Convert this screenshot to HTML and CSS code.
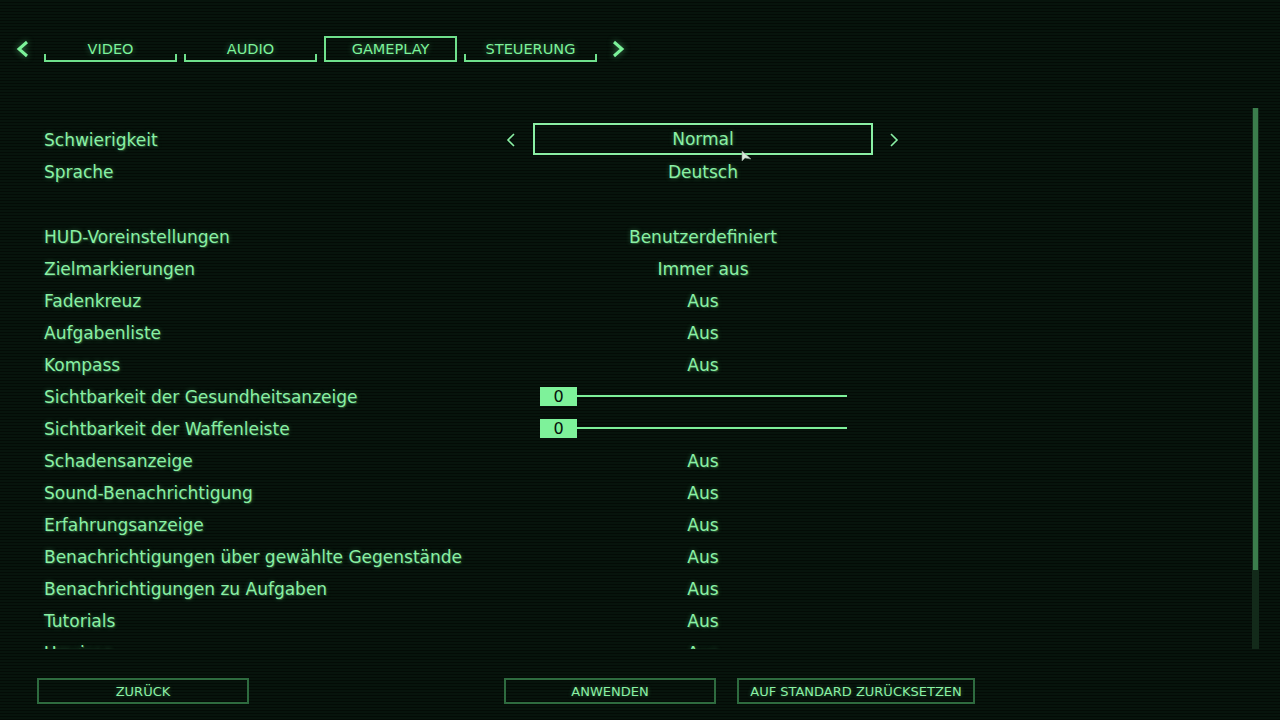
FILE: index.html
```html
<!DOCTYPE html>
<html lang="de">
<head>
  <meta charset="UTF-8" />
  <meta name="viewport" content="width=device-width, initial-scale=1.0" />
  <title>Einstellungen - Gameplay</title>
  <link rel="stylesheet" href="styles.css">
</head>
<body>
  <div class="screen">
    <nav class="tabs">
      <span class="chev">
        <svg width="14" height="18" viewBox="0 0 14 18"><path d="M11 2 L3 9 L11 16" fill="none" stroke="#7cf29a" stroke-width="3"/></svg>
      </span>
      <div class="tab">VIDEO</div>
      <div class="tab">AUDIO</div>
      <div class="tab active">GAMEPLAY</div>
      <div class="tab">STEUERUNG</div>
      <span class="chev">
        <svg width="14" height="18" viewBox="0 0 14 18"><path d="M3 2 L11 9 L3 16" fill="none" stroke="#7cf29a" stroke-width="3"/></svg>
      </span>
    </nav>

    <main class="panel">
      <div class="list">
        <div class="row">
          <span class="label">Schwierigkeit</span>
          <span class="arrow">
            <svg width="10" height="16" viewBox="0 0 10 16"><path d="M8 2 L2 8 L8 14" fill="none" stroke="#8af0a4" stroke-width="1.6"/></svg>
          </span>
          <span class="value boxed">Normal</span>
          <span class="arrow">
            <svg width="10" height="16" viewBox="0 0 10 16"><path d="M2 2 L8 8 L2 14" fill="none" stroke="#8af0a4" stroke-width="1.6"/></svg>
          </span>
          <svg class="cursor" width="12" height="14" viewBox="0 0 12 14"><path d="M1 1 L1 11 L4 8 L10 9 Z" fill="#d8e8dc" stroke="#8a9a90" stroke-width="0.6"/></svg>
        </div>
        <div class="row">
          <span class="label">Sprache</span>
          <span class="arrow"></span>
          <span class="value">Deutsch</span>
        </div>

        <div class="spacer"></div>

        <div class="row"><span class="label">HUD-Voreinstellungen</span><span class="arrow"></span><span class="value">Benutzerdefiniert</span></div>
        <div class="row"><span class="label">Zielmarkierungen</span><span class="arrow"></span><span class="value">Immer aus</span></div>
        <div class="row"><span class="label">Fadenkreuz</span><span class="arrow"></span><span class="value">Aus</span></div>
        <div class="row"><span class="label">Aufgabenliste</span><span class="arrow"></span><span class="value">Aus</span></div>
        <div class="row"><span class="label">Kompass</span><span class="arrow"></span><span class="value">Aus</span></div>
        <div class="row">
          <span class="label">Sichtbarkeit der Gesundheitsanzeige</span>
          <span class="arrow"></span>
          <span class="slider"><span class="knob">0</span><span class="track"></span></span>
        </div>
        <div class="row">
          <span class="label">Sichtbarkeit der Waffenleiste</span>
          <span class="arrow"></span>
          <span class="slider"><span class="knob">0</span><span class="track"></span></span>
        </div>
        <div class="row"><span class="label">Schadensanzeige</span><span class="arrow"></span><span class="value">Aus</span></div>
        <div class="row"><span class="label">Sound-Benachrichtigung</span><span class="arrow"></span><span class="value">Aus</span></div>
        <div class="row"><span class="label">Erfahrungsanzeige</span><span class="arrow"></span><span class="value">Aus</span></div>
        <div class="row"><span class="label">Benachrichtigungen über gewählte Gegenstände</span><span class="arrow"></span><span class="value">Aus</span></div>
        <div class="row"><span class="label">Benachrichtigungen zu Aufgaben</span><span class="arrow"></span><span class="value">Aus</span></div>
        <div class="row"><span class="label">Tutorials</span><span class="arrow"></span><span class="value">Aus</span></div>
        <div class="row"><span class="label">Umrisse</span><span class="arrow"></span><span class="value">Aus</span></div>
      </div>
      <div class="scrollbar"><div class="thumb"></div></div>
    </main>

    <footer class="buttons">
      <button class="btn back">ZURÜCK</button>
      <button class="btn apply">ANWENDEN</button>
      <button class="btn reset">AUF STANDARD ZURÜCKSETZEN</button>
    </footer>
  </div>
</body>
</html>
```

FILE: styles.css
```css
html, body { margin: 0; padding: 0; }
body {
  width: 1280px; height: 720px; overflow: hidden;
  background: #06110a;
  font-family: "DejaVu Sans", sans-serif;
  color: #8af0a4;
}
.screen {
  height: 720px;
  display: flex; flex-direction: column;
  background: repeating-linear-gradient(to bottom, #07140c 0, #07140c 2px, #040b06 2px, #040b06 3px);
}

/* tabs */
.tabs { display: flex; align-items: center; gap: 7px; padding: 36px 0 0 16px; height: 26px; }
.chev { display: flex; width: 14px; height: 18px; filter: drop-shadow(0 0 3px rgba(110,240,150,.5)); }
.tabs .chev:first-child { margin-right: 7px; }
.tabs .chev:last-child { margin-left: 7px; }
.tab {
  position: relative; box-sizing: border-box;
  width: 133px; height: 26px; line-height: 27px; text-align: center;
  font-size: 14.5px; color: #7cf29a;
  text-shadow: 0 0 6px rgba(110,240,150,.45);
}
.tab::after {
  content: ""; position: absolute; left: 0; right: 0; bottom: 0; height: 6px;
  border: 2px solid #6fe08c; border-top: none;
}
.tab.active { border: 2px solid #6fe08c; line-height: 23px; }
.tab.active::after { display: none; }

/* settings list */
.panel { display: flex; height: 541px; margin-top: 46px; }
.list { flex: 1; padding: 15px 0 0 44px; overflow: hidden; }
.row {
  position: relative;
  display: flex; align-items: center; height: 32px; padding-top: 1px; box-sizing: border-box;
  font-size: 17px; text-shadow: 0 0 5px rgba(110,240,150,.35), 1px 1px 0 rgba(40,90,55,.6);
}
.label { width: 456px; }
.arrow { display: flex; justify-content: center; width: 22px; margin-right: 11px; }
.arrow + .value + .arrow { margin: 0 0 0 10px; }
.value { width: 340px; text-align: center; }
.value.boxed { box-sizing: border-box; height: 32px; line-height: 28px; border: 2px solid #8af0a4; margin-top: -1px; }
.spacer { height: 33px; }
.cursor { position: absolute; left: 697px; top: 27px; }

.slider { display: flex; align-items: center; margin-left: 7px; width: 307px; margin-top: -1px; }
.knob {
  width: 37px; height: 19px; line-height: 20px; text-align: center;
  background: #7ef29a; color: #06110a; font-size: 16px; text-shadow: none;
}
.track { flex: 1; height: 2px; background: #7ef29a; }

.scrollbar { width: 7px; margin: 0 21px 0 12px; background: #132a1a; height: 541px; }
.thumb { width: 5px; margin: 0 1px; height: 462px; background: #3b7d4c; }

/* footer buttons */
.buttons { display: flex; padding: 29px 0 0 37px; }
.btn {
  box-sizing: border-box; height: 26px;
  background: transparent; border: 2px solid #2e6b3f;
  color: #8af0a4; font-family: "DejaVu Sans", sans-serif; font-size: 13px;
  text-shadow: 0 0 4px rgba(110,240,150,.35);
}
.back { width: 212px; margin-right: 255px; }
.apply { width: 212px; margin-right: 21px; }
.reset { width: 238px; }
```
